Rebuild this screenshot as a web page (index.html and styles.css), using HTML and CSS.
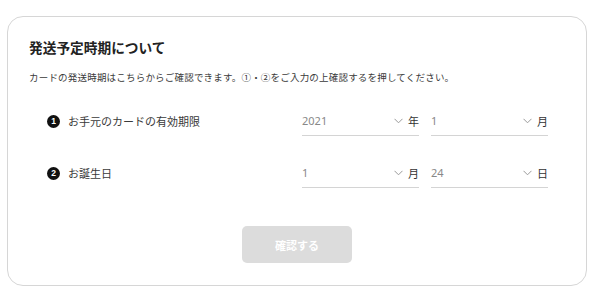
FILE: index.html
```html
<!DOCTYPE html>
<html>
<head>
    <meta charset="utf-8">
    <title>発送予定時期について</title>
    <link rel="stylesheet" href="styles.css">
</head>
<body>
    <div class="card">
        <h2 class="card-title">発送予定時期について</h2>
        <p class="card-desc">カードの発送時期はこちらからご確認できます。①・②をご入力の上確認するを押してください。</p>

        <div class="form-row">
            <div class="form-label"><span class="num">1</span>お手元のカードの有効期限</div>
            <div class="selects">
                <label class="select-box">
                    <select><option>2021</option></select>
                    <svg class="chevron" width="9" height="6" viewBox="0 0 9 6"><path d="M0.5 0.8 L4.5 4.8 L8.5 0.8" fill="none" stroke="#9a9a9a" stroke-width="1"/></svg>
                    <span class="unit">年</span>
                </label>
                <label class="select-box">
                    <select><option>1</option></select>
                    <svg class="chevron" width="9" height="6" viewBox="0 0 9 6"><path d="M0.5 0.8 L4.5 4.8 L8.5 0.8" fill="none" stroke="#9a9a9a" stroke-width="1"/></svg>
                    <span class="unit">月</span>
                </label>
            </div>
        </div>

        <div class="form-row">
            <div class="form-label"><span class="num">2</span>お誕生日</div>
            <div class="selects">
                <label class="select-box">
                    <select><option>1</option></select>
                    <svg class="chevron" width="9" height="6" viewBox="0 0 9 6"><path d="M0.5 0.8 L4.5 4.8 L8.5 0.8" fill="none" stroke="#9a9a9a" stroke-width="1"/></svg>
                    <span class="unit">月</span>
                </label>
                <label class="select-box">
                    <select><option>24</option></select>
                    <svg class="chevron" width="9" height="6" viewBox="0 0 9 6"><path d="M0.5 0.8 L4.5 4.8 L8.5 0.8" fill="none" stroke="#9a9a9a" stroke-width="1"/></svg>
                    <span class="unit">日</span>
                </label>
            </div>
        </div>

        <div class="actions">
            <button class="confirm-btn" disabled>確認する</button>
        </div>
    </div>
</body>
</html>
```

FILE: styles.css
```css
body {
    margin: 0;
    background: #fff;
    font-family: "Noto Sans CJK JP", "Noto Sans", sans-serif;
    color: #333;
}
.card {
    margin: 16px 13px 0 7px;
    height: 270px;
    box-sizing: border-box;
    border: 1px solid #d6d6d6;
    border-radius: 16px;
    padding: 20px 21px 0;
}
.card-title {
    margin: 0;
    font-size: 13.7px;
    line-height: 20px;
    font-weight: bold;
    color: #222;
}
.card-desc {
    margin: 12px 0 0;
    font-size: 9.5px;
    letter-spacing: 0.2px;
    line-height: 16px;
    color: #3a3a3a;
}
.form-row {
    display: flex;
    align-items: center;
    margin-top: 21px;
}
.form-row + .form-row {
    margin-top: 22px;
}
.form-label {
    width: 255px;
    padding-left: 18px;
    display: flex;
    align-items: center;
    font-size: 11px;
    color: #3a3a3a;
}
.num {
    width: 13px;
    height: 13px;
    border-radius: 50%;
    background: #111;
    color: #fff;
    font-size: 8.5px;
    font-weight: bold;
    line-height: 13px;
    text-align: center;
    margin-right: 8px;
    font-family: "Liberation Sans", Arial, sans-serif;
}
.selects {
    display: flex;
    gap: 12px;
}
.select-box {
    width: 117px;
    height: 29px;
    display: flex;
    align-items: center;
    border-bottom: 1px solid #d4d4d4;
}
.select-box select {
    flex: 1;
    min-width: 0;
    appearance: none;
    border: none;
    background: transparent;
    padding: 0;
    margin: 0;
    font-family: "Noto Sans", sans-serif;
    font-size: 11px;
    color: #888;
    outline: none;
}
.chevron {
    margin-right: 5px;
}
.unit {
    font-size: 11px;
    color: #333;
    width: 11px;
}
.actions {
    display: flex;
    justify-content: center;
    margin-top: 38px;
}
.confirm-btn {
    width: 110px;
    height: 37px;
    border: none;
    border-radius: 5px;
    background: #dcdcdc;
    color: #fff;
    font-family: "Noto Sans CJK JP", sans-serif;
    font-size: 11px;
    font-weight: bold;
}
```
